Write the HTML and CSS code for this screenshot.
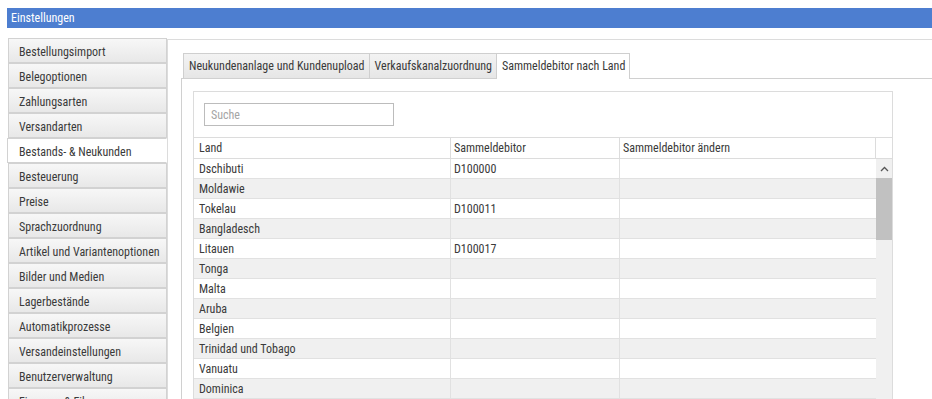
FILE: index.html
```html
<!DOCTYPE html>
<html lang="de">
<head>
<meta charset="utf-8">
<title>Einstellungen</title>
<link rel="stylesheet" href="styles.css">
</head>
<body>
<div class="titlebar">Einstellungen</div>
<div class="layout">
  <ul class="nav">
    <li class="nav-item">Bestellungsimport</li>
    <li class="nav-item">Belegoptionen</li>
    <li class="nav-item">Zahlungsarten</li>
    <li class="nav-item">Versandarten</li>
    <li class="nav-item active">Bestands- &amp; Neukunden</li>
    <li class="nav-item">Besteuerung</li>
    <li class="nav-item">Preise</li>
    <li class="nav-item">Sprachzuordnung</li>
    <li class="nav-item">Artikel und Variantenoptionen</li>
    <li class="nav-item">Bilder und Medien</li>
    <li class="nav-item">Lagerbestände</li>
    <li class="nav-item">Automatikprozesse</li>
    <li class="nav-item">Versandeinstellungen</li>
    <li class="nav-item">Benutzerverwaltung</li>
    <li class="nav-item">Finanzen &amp; Fibu</li>
  </ul>
  <section class="panel">
    <div class="tabs">
      <div class="tab">Neukundenanlage und Kundenupload</div>
      <div class="tab">Verkaufskanalzuordnung</div>
      <div class="tab active">Sammeldebitor nach Land</div>
    </div>
    <div class="tab-body">
      <div class="grid">
        <div class="toolbar"><div class="search">Suche</div></div>
        <div class="grid-head">
          <div class="cell first">Land</div>
          <div class="cell">Sammeldebitor</div>
          <div class="cell">Sammeldebitor ändern</div>
          <div class="cell scroll-head"></div>
        </div>
        <div class="grid-body">
          <div class="rows">
            <div class="row"><div class="cell first">Dschibuti</div><div class="cell">D100000</div><div class="cell"></div></div>
            <div class="row alt"><div class="cell first">Moldawie</div><div class="cell"></div><div class="cell"></div></div>
            <div class="row"><div class="cell first">Tokelau</div><div class="cell">D100011</div><div class="cell"></div></div>
            <div class="row alt"><div class="cell first">Bangladesch</div><div class="cell"></div><div class="cell"></div></div>
            <div class="row"><div class="cell first">Litauen</div><div class="cell">D100017</div><div class="cell"></div></div>
            <div class="row alt"><div class="cell first">Tonga</div><div class="cell"></div><div class="cell"></div></div>
            <div class="row"><div class="cell first">Malta</div><div class="cell"></div><div class="cell"></div></div>
            <div class="row alt"><div class="cell first">Aruba</div><div class="cell"></div><div class="cell"></div></div>
            <div class="row"><div class="cell first">Belgien</div><div class="cell"></div><div class="cell"></div></div>
            <div class="row alt"><div class="cell first">Trinidad und Tobago</div><div class="cell"></div><div class="cell"></div></div>
            <div class="row"><div class="cell first">Vanuatu</div><div class="cell"></div><div class="cell"></div></div>
            <div class="row alt"><div class="cell first">Dominica</div><div class="cell"></div><div class="cell"></div></div>
          </div>
          <div class="scrollbar">
            <div class="scroll-arrow"><svg width="9" height="6" viewBox="0 0 9 6"><polyline points="1,5 4.5,1.5 8,5" fill="none" stroke="#555" stroke-width="1.3"/></svg></div>
            <div class="scroll-thumb"></div>
          </div>
        </div>
      </div>
    </div>
  </section>
</div>
</body>
</html>
```
FILE: styles.css
```css
html, body {
  margin: 0;
  padding: 0;
  background: #ffffff;
  height: 399px;
  overflow: hidden;
}
body {
  font-family: "Roboto Condensed", Roboto, "Liberation Sans", sans-serif;
  font-stretch: condensed;
  font-size: 12px;
  color: #3a3a3a;
}
.titlebar {
  margin: 8px 0 0 7px;
  height: 20px;
  line-height: 21px;
  padding-left: 4px;
  background: #4d7ed0;
  color: #ffffff;
  font-size: 12px;
}
.layout {
  display: flex;
  margin-top: 10px;
  align-items: flex-start;
}
.nav {
  list-style: none;
  margin: 0 0 0 8px;
  padding: 0;
  width: 159px;
  flex: none;
}
.nav-item {
  height: 20px;
  line-height: 20px;
  padding: 3px 0 0 10px;
  border: 1px solid #d2d2d2;
  background: linear-gradient(#f7f7f7, #e8e8e8);
  white-space: nowrap;
  overflow: hidden;
}
.nav-item.active {
  background: #ffffff;
  margin-left: -1px;
  padding-left: 11px;
  border-right-color: #ffffff;
}
.panel {
  flex: 1;
  margin-top: 1px;
  height: 360px;
  border-top: 1px solid #dcdcdc;
  border-left: 1px solid #dcdcdc;
  overflow: hidden;
}
.tabs {
  display: flex;
  margin-top: 13px;
  padding-left: 15px;
}
.tab {
  height: 24px;
  line-height: 24px;
  padding: 0 4px 0 5px;
  border: 1px solid #cfcfcf;
  border-bottom: none;
  border-right: none;
  background: linear-gradient(#f3f3f3, #e6e6e6);
  white-space: nowrap;
}
.tab.active {
  background: #ffffff;
  border-right: 1px solid #cfcfcf;
  position: relative;
  margin-bottom: -1px;
  height: 25px;
}
.tab-body {
  margin-left: 13px;
  border-top: 1px solid #d0d0d0;
  border-left: 1px solid #d0d0d0;
  padding: 12px 0 0 11px;
  height: 320px;
}
.grid {
  width: 698px;
  border: 1px solid #dcdcdc;
  background: #ffffff;
}
.toolbar {
  height: 45px;
  padding: 11px 0 0 10px;
  box-sizing: border-box;
}
.search {
  width: 190px;
  height: 23px;
  box-sizing: border-box;
  border: 1px solid #bcbcbc;
  line-height: 22px;
  padding-left: 6px;
  color: #a5a5a5;
}
.grid-head {
  display: grid;
  grid-template-columns: 257px 169px 256px 16px;
  height: 20px;
  border-top: 1px solid #dcdcdc;
  border-bottom: 1px solid #dcdcdc;
}
.grid-head .cell {
  line-height: 21px;
  border-right: 1px solid #dcdcdc;
}
.grid-head .cell.scroll-head {
  border-right: none;
}
.cell {
  padding-left: 3px;
  white-space: nowrap;
  overflow: hidden;
}
.cell.first {
  padding-left: 5px;
}
.grid-body {
  display: flex;
}
.rows {
  width: 682px;
}
.row {
  display: grid;
  grid-template-columns: 257px 169px 256px;
  height: 19px;
  border-bottom: 1px solid #e1e1e1;
  background: #ffffff;
}
.row.alt {
  background: #f0f0f0;
}
.row .cell {
  line-height: 18px;
  padding-top: 1px;
  border-right: 1px solid #e1e1e1;
}
.row .cell:last-child {
  border-right: none;
}
.scrollbar {
  width: 16px;
  background: #f0f0f0;
  display: flex;
  flex-direction: column;
}
.scroll-arrow {
  height: 19px;
  display: flex;
  align-items: center;
  justify-content: center;
  background: #f0f0f0;
}
.scroll-thumb {
  height: 62px;
  background: #c1c1c1;
}
```
